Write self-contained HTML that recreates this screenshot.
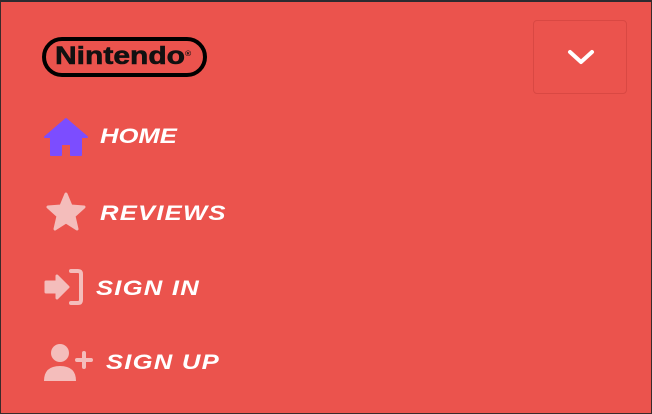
<!DOCTYPE html>
<html><head><style>
html,body{margin:0;padding:0}
body{width:652px;height:414px;background:#eb534d;position:relative;overflow:hidden;font-family:"Liberation Sans",sans-serif}
.top{position:absolute;left:0;top:0;width:652px;height:2px;background:#2b2b30}
.l{position:absolute;left:0;top:0;width:1px;height:414px;background:#3a2a2a}
.r{position:absolute;right:0;top:0;width:1px;height:414px;background:#3a2a2a}
.b{position:absolute;left:0;bottom:0;width:652px;height:1px;background:#3a2a2a}
.logo{position:absolute;left:42px;top:37px;width:165px;height:40px;border:4px solid #000;border-radius:20px;box-sizing:border-box}
.logo span{position:absolute;left:9px;top:0;font-weight:bold;font-size:25px;line-height:31px;color:#111;-webkit-text-stroke:0.6px #111;transform:scaleX(1.2);transform-origin:left;white-space:nowrap}
.logo sup{font-size:7px;vertical-align:top;position:relative;top:-2px;-webkit-text-stroke:0}
.btn{position:absolute;left:533px;top:20px;width:94px;height:74px;border:1px solid #d94843;border-radius:4px;box-sizing:border-box}
.t{position:absolute;color:#fff;font-weight:bold;font-style:italic;font-size:21px;letter-spacing:1px;line-height:1;transform:scaleX(1.22);transform-origin:left;white-space:nowrap}
svg{position:absolute}
</style></head><body>
<div class="top"></div><div class="l"></div><div class="r"></div><div class="b"></div>
<div class="logo"><span>Nintendo<sup>®</sup></span></div>
<div class="btn"></div>
<svg style="left:566px;top:48px" width="30" height="20" viewBox="0 0 30 20"><path d="M4 4 L15 14 L26 4" fill="none" stroke="#fff" stroke-width="4" stroke-linecap="round" stroke-linejoin="round"/></svg>
<svg style="left:43px;top:117px" width="46" height="40" viewBox="0 0 46 40"><path d="M23 2 L44 20 L38 20 L38 38 L28 38 L28 27 L18 27 L18 38 L8 38 L8 20 L2 20 Z" fill="#7c4dff" stroke="#7c4dff" stroke-width="2" stroke-linejoin="round"/></svg>
<div class="t" style="left:100px;top:126px;letter-spacing:0">HOME</div>
<svg style="left:45px;top:191px" width="42" height="42" viewBox="0 0 42 42"><path d="M21 3 L26 15 L39 16 L29 25 L32 38 L21 31 L10 38 L13 25 L3 16 L16 15 Z" fill="#f4bdbb" stroke="#f4bdbb" stroke-width="3" stroke-linejoin="round"/></svg>
<div class="t" style="left:100px;top:203px">REVIEWS</div>
<svg style="left:43px;top:268px" width="42" height="38" viewBox="0 0 42 38"><path d="M3 14 H14 V8 L25 19 L14 30 V24 H3 Z" fill="#f4bdbb" stroke="#f4bdbb" stroke-width="3" stroke-linejoin="round"/><path d="M28 3 H35 Q38 3 38 6 V32 Q38 35 35 35 H28" fill="none" stroke="#f4bdbb" stroke-width="4" stroke-linecap="round"/></svg>
<div class="t" style="left:96px;top:278px">SIGN IN</div>
<svg style="left:43px;top:342px" width="52" height="42" viewBox="0 0 52 42"><circle cx="17" cy="11" r="9" fill="#f4bdbb"/><path d="M1 39 Q1 24 17 24 Q33 24 33 39 Z" fill="#f4bdbb"/><path d="M41 11 V25 M34 18 H48" stroke="#f4bdbb" stroke-width="4" stroke-linecap="round"/></svg>
<div class="t" style="left:106px;top:352px">SIGN UP</div>
</body></html>
